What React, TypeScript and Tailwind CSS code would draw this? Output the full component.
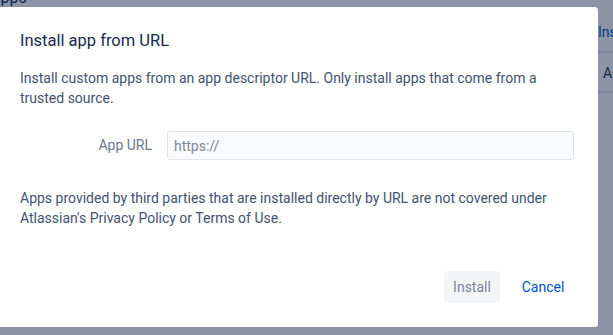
const font = "font-['Roboto','Liberation_Sans',sans-serif]";

function BackgroundPage() {
  return (
    <div className={`min-h-[335px] w-[613px] bg-white ${font}`}>
      <div className="flex">
        <div className="w-[598px] shrink-0">
          <h1 className="mt-[-12px] ml-[-10px] text-[16px] leading-[20px] text-[#172b4d]">Apps</h1>
        </div>
        <div className="flex-1 pt-[24px]">
          <a className="block text-[14px] leading-[16px] text-[#0052cc]">Install</a>
          <div className="mt-[11px] h-[42px] border-t-2 border-b-2 border-[#dfe1e6] pl-[5px] pt-[12px] text-[14px] leading-[16px] text-[#172b4d]">
            App
          </div>
        </div>
      </div>
    </div>
  );
}

export default function App() {
  return (
    <div className="relative h-[335px] w-[613px] overflow-hidden">
      <BackgroundPage />
      <div className="absolute inset-0 bg-[rgba(9,30,66,0.47)]" />
      <div
        role="dialog"
        className={`absolute left-[-4px] top-[7px] flex h-[320px] w-[602px] flex-col rounded-[3px] bg-white pl-[24px] pr-[24px] pt-[22px] shadow-[0_0_1px_rgba(9,30,66,0.3)] ${font}`}
      >
        <h2 className="text-[16.5px] leading-[24px] text-[#172b4d]">Install app from URL</h2>
        <p className="mt-[15px] text-[14px] leading-[20px] text-[#42526e]">
          Install custom apps from an app descriptor URL. Only install apps that come from a trusted source.
        </p>
        <div className="mt-[23px] flex items-center">
          <label htmlFor="app-url" className="w-[132px] text-right text-[14px] text-[#6b778c]">
            App URL
          </label>
          <input
            id="app-url"
            placeholder="https://"
            className="ml-[15px] h-[29px] flex-1 rounded-[3px] border border-[#dfe1e6] bg-[#fafbfc] px-[6px] text-[14px] text-[#172b4d] outline-none placeholder:text-[#7a869a]"
          />
        </div>
        <p className="mt-[28px] text-[14px] leading-[20px] text-[#42526e]">
          Apps provided by third parties that are installed directly by URL are not covered under Atlassian's Privacy Policy or Terms of Use.
        </p>
        <div className="mt-auto mb-[24px] flex justify-end">
          <button
            disabled
            className="h-[32px] w-[56px] rounded-[3px] bg-[#f4f5f7] text-[14px] text-[#7a869a]"
          >
            Install
          </button>
          <button className="ml-[12px] h-[32px] w-[62px] rounded-[3px] text-[14px] text-[#0052cc]">
            Cancel
          </button>
        </div>
      </div>
    </div>
  );
}
